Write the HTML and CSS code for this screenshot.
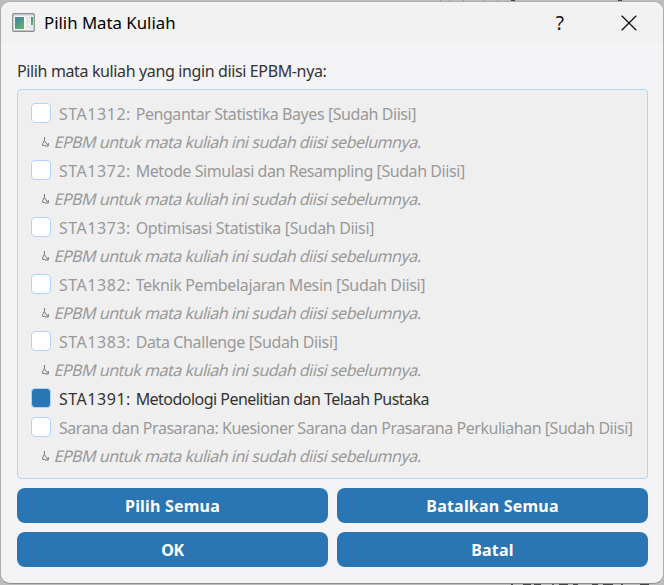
FILE: index.html
```
<!DOCTYPE html>
<html lang="id">
<head>
<meta charset="utf-8">
<title>Pilih Mata Kuliah</title>
<link rel="stylesheet" href="styles.css">
</head>
<body>
<div class="backdrop">
<main class="dialog">
  <header class="titlebar">
    <svg class="app-icon" width="23" height="19" viewBox="0 0 23 19">
      <defs><linearGradient id="g" x1="0" y1="0" x2="0.7" y2="1"><stop stop-color="#417ba5"/><stop offset="1" stop-color="#61b56e"/></linearGradient></defs>
      <rect x=".75" y=".75" width="21.5" height="17.5" rx="1" fill="#f3f4f5" stroke="#8b9096" stroke-width="1.3"/>
      <path d="M2 2h19" stroke="#c6cbd0"/>
      <rect x="3" y="4" width="9" height="12" fill="url(#g)"/>
      <path d="M14 4h4v7h-4zM14 12h7v4h-7z" fill="#e5e7e8"/>
      <rect x="19" y="4" width="2" height="8" fill="url(#g)"/>
    </svg>
    <h1 class="title">Pilih Mata Kuliah</h1>
    <span class="help">?</span>
    <svg class="close" width="16" height="16" viewBox="0 0 16 16"><path d="M.7.7l14.6 14.6M15.3.7L.7 15.3" stroke="#111" stroke-width="1.3"/></svg>
  </header>
  <section class="content">
    <p class="prompt">Pilih mata kuliah yang ingin diisi EPBM-nya:</p>
    <div class="list">
      <div class="row"><i class="box"></i><span class="t1"><span class="code">STA1312: </span>Pengantar Statistika Bayes [Sudah Diisi]</span></div>
      <div class="note"><svg class="hook" width="7" height="10" viewBox="0 0 7 10"><path d="M2.5 0v3L.7 6.5v2h2M2.5 4l3.5 4.5M6.3 6v3H3" /></svg><span>EPBM untuk mata kuliah ini sudah diisi sebelumnya.</span></div>
      <div class="row"><i class="box"></i><span class="t2"><span class="code">STA1372: </span>Metode Simulasi dan Resampling [Sudah Diisi]</span></div>
      <div class="note"><svg class="hook" width="7" height="10" viewBox="0 0 7 10"><path d="M2.5 0v3L.7 6.5v2h2M2.5 4l3.5 4.5M6.3 6v3H3" /></svg><span>EPBM untuk mata kuliah ini sudah diisi sebelumnya.</span></div>
      <div class="row"><i class="box"></i><span class="t3"><span class="code">STA1373: </span>Optimisasi Statistika [Sudah Diisi]</span></div>
      <div class="note"><svg class="hook" width="7" height="10" viewBox="0 0 7 10"><path d="M2.5 0v3L.7 6.5v2h2M2.5 4l3.5 4.5M6.3 6v3H3" /></svg><span>EPBM untuk mata kuliah ini sudah diisi sebelumnya.</span></div>
      <div class="row"><i class="box"></i><span class="t4"><span class="code">STA1382: </span>Teknik Pembelajaran Mesin [Sudah Diisi]</span></div>
      <div class="note"><svg class="hook" width="7" height="10" viewBox="0 0 7 10"><path d="M2.5 0v3L.7 6.5v2h2M2.5 4l3.5 4.5M6.3 6v3H3" /></svg><span>EPBM untuk mata kuliah ini sudah diisi sebelumnya.</span></div>
      <div class="row"><i class="box"></i><span class="t5"><span class="code">STA1383: </span>Data Challenge [Sudah Diisi]</span></div>
      <div class="note"><svg class="hook" width="7" height="10" viewBox="0 0 7 10"><path d="M2.5 0v3L.7 6.5v2h2M2.5 4l3.5 4.5M6.3 6v3H3" /></svg><span>EPBM untuk mata kuliah ini sudah diisi sebelumnya.</span></div>
      <div class="row selected"><i class="box"></i><span class="t6"><span class="code">STA1391: </span>Metodologi Penelitian dan Telaah Pustaka</span></div>
      <div class="row"><i class="box"></i><span class="t7">Sarana dan Prasarana: Kuesioner Sarana dan Prasarana Perkuliahan [Sudah Diisi]</span></div>
      <div class="note"><svg class="hook" width="7" height="10" viewBox="0 0 7 10"><path d="M2.5 0v3L.7 6.5v2h2M2.5 4l3.5 4.5M6.3 6v3H3" /></svg><span>EPBM untuk mata kuliah ini sudah diisi sebelumnya.</span></div>
    </div>
    <div class="actions">
      <button>Pilih Semua</button>
      <button>Batalkan Semua</button>
      <button class="short">OK</button>
      <button>Batal</button>
    </div>
  </section>
</main>
</div>
</body>
</html>
```
FILE: styles.css
```
* { box-sizing: border-box; }
body { margin: 0; font-family: "Noto Sans", sans-serif; font-size: 16px; overflow: hidden; }

/* Edges of the editor window that show round the dialog */
.backdrop {
  width: 664px;
  height: 585px;
  padding: 1px 0;
  background:
    linear-gradient(90deg, #8295ad 1px, transparent 1px 9px, #8295ad 9px 10px, transparent 10px 23px, #8295ad 23px 24px, transparent 24px 43px, #8295ad 43px 44px, transparent 44px 57px, #8295ad 57px 58px, transparent 58px 71px, #444 71px 75px, transparent 75px 178px, #444 178px 182px, transparent 182px) 440px 0 / 224px 1px no-repeat,
    linear-gradient(90deg, transparent 71px, #444 71px 73px, transparent 73px 83px, #444 83px 91px, transparent 91px 94px, #444 94px 101px, transparent 101px 112px, #555 112px 114px, transparent 114px 119px, #444 119px 128px, transparent 128px 133px, #444 133px 138px, transparent 138px 152px, #444 152px 158px, transparent 158px 163px, #444 163px 173px, transparent 173px 181px, #444 181px 183px, transparent 183px 200px, #444 200px 209px, transparent 209px) 440px 584px / 224px 1px no-repeat,
    #bdbdbd;
}
.dialog { height: 583px; border: 1px solid #adadad; border-bottom-color: #929292; border-radius: 10px; background: #f4f4f7; overflow: hidden; }
.titlebar { display: flex; align-items: center; height: 43px; padding: 0 26px 2px 11px; background: #f2f2f2; }
.app-icon { flex: none; }
.title { margin: 0 0 0 9px; font-size: 16.8px; font-weight: 400; color: #000; white-space: nowrap; }
.help { margin-left: auto; margin-right: 57px; font-size: 19px; line-height: 20px; font-weight: 400; color: #111; }
.close { flex: none; }
.content { padding: 0 15px 0 16px; }
.prompt { margin: 0; height: 44px; line-height: 52px; letter-spacing: -.37px; color: #333; white-space: nowrap; }
.list { height: 390px; padding: 9px 0 0 13px; border: 1px solid #b0d3ff; border-radius: 4px; background: #efefef; color: #999; }
.row { display: flex; align-items: center; height: 28px; gap: 8px; white-space: nowrap; }
.row > span { padding-top: 2px; }
.selected { height: 29px; padding-bottom: 1px; color: #333; }
.box { flex: none; width: 20px; height: 20px; border: 1px solid #b0d3ff; border-radius: 4px; background: #fff; }
.selected .box { background: #2a75b3; }
.code { letter-spacing: .53px; }
.t1 { letter-spacing: -.43px; }
.t2 { letter-spacing: -.43px; }
.t3 { letter-spacing: -.34px; }
.t4 { letter-spacing: -.35px; }
.t5 { letter-spacing: -.38px; }
.t6 { letter-spacing: -.53px; }
.t7 { letter-spacing: -.46px; }
.note { display: flex; align-items: center; height: 29px; padding-left: 11px; gap: 6px; white-space: nowrap; }
.note span { letter-spacing: -.48px; transform: skewX(-14deg); }
.hook { fill: none; stroke: #777; stroke-width: 1; }
.actions { display: grid; grid-template-columns: 1fr 1fr; grid-auto-rows: 35px; gap: 9px; margin-top: 9px; }
button { border: 0; border-radius: 8px; background: #2a75b3; color: #fff; font: 700 16px "Noto Sans", sans-serif; letter-spacing: .2px; }
.short { letter-spacing: -.3px; }
```
